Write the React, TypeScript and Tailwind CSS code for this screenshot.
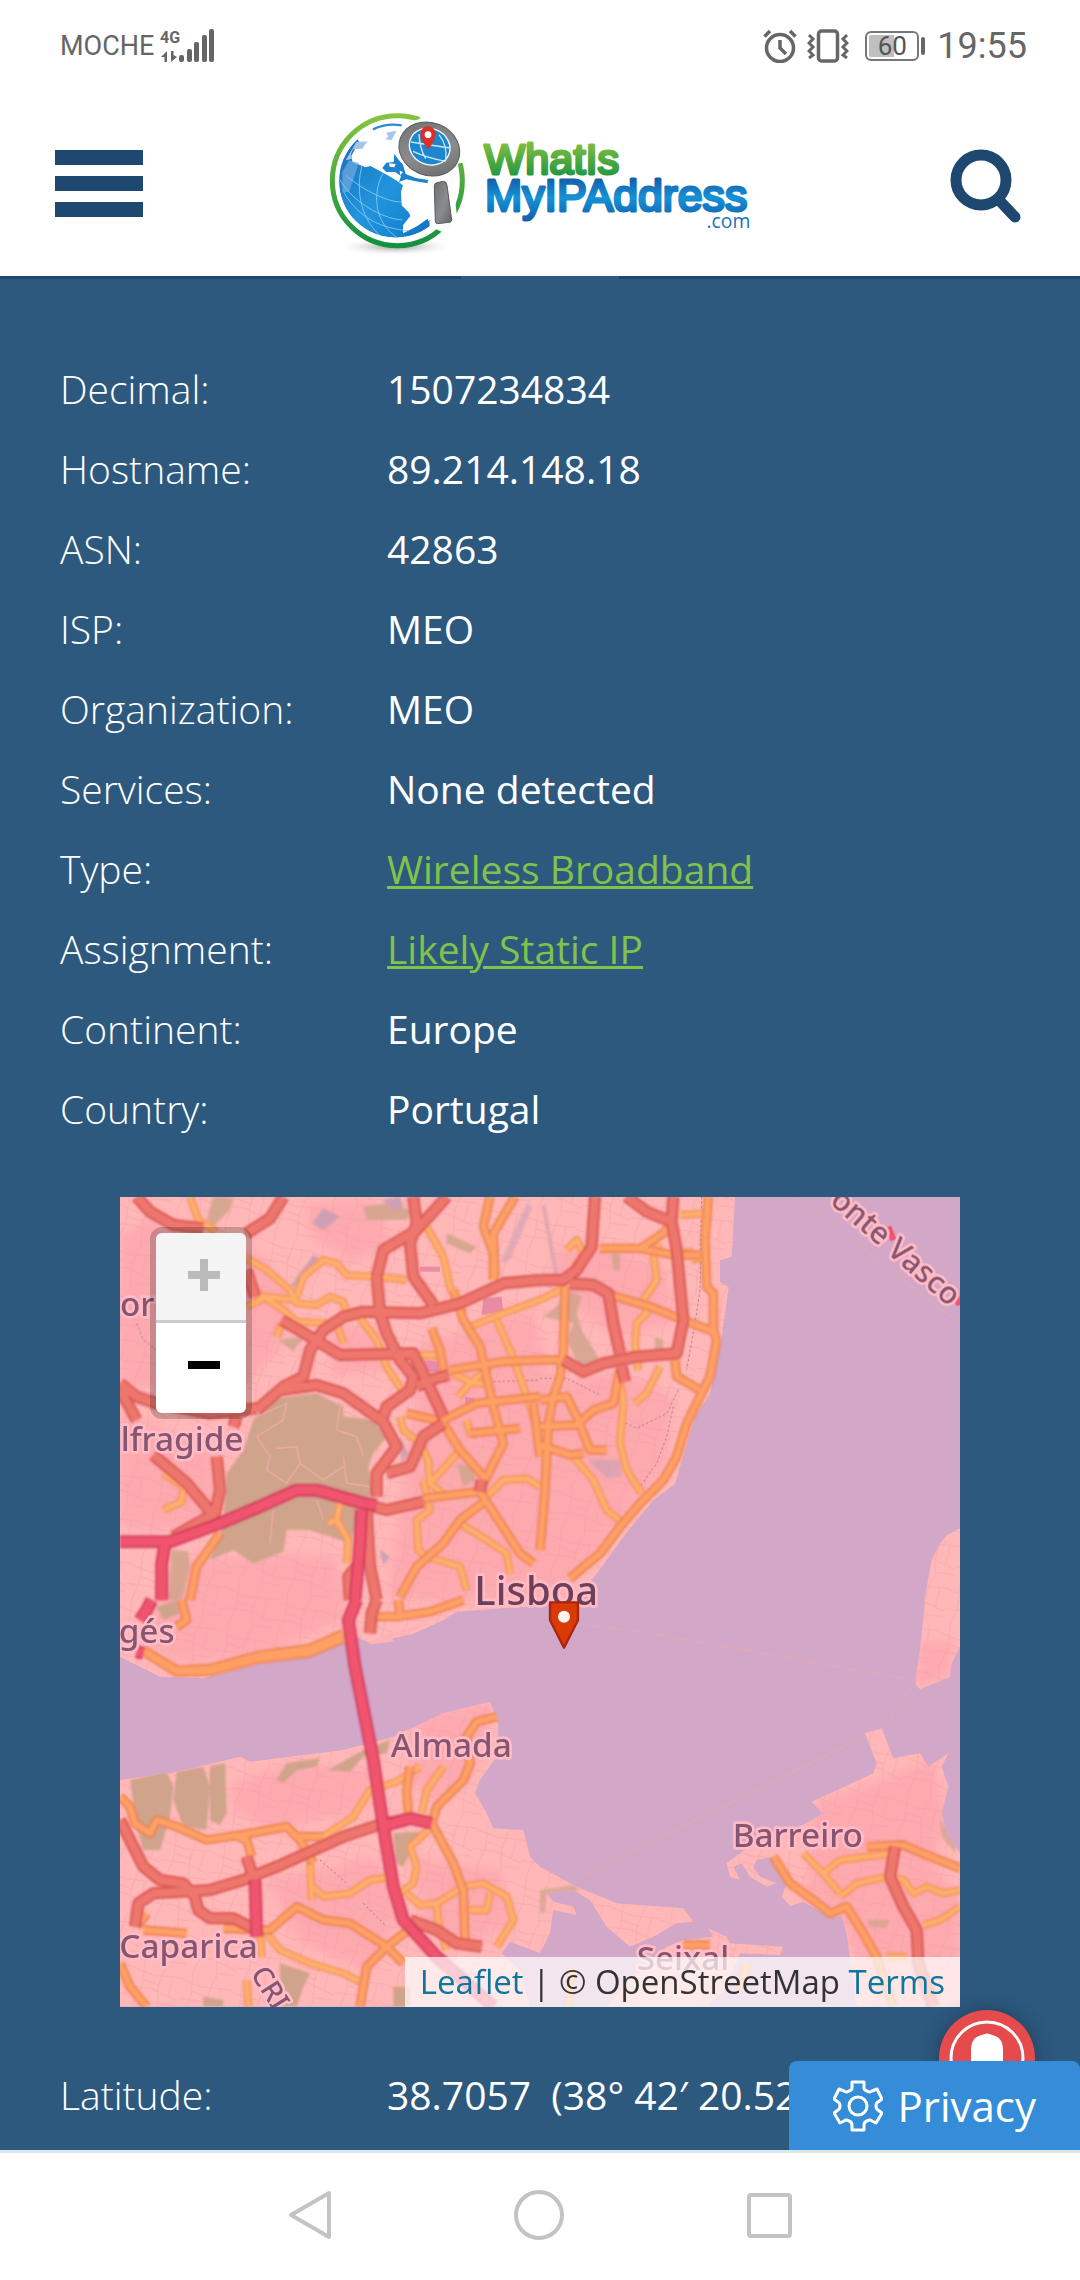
const rows: { label: string; value: string; link?: boolean }[] = [
  { label: "Decimal:", value: "1507234834" },
  { label: "Hostname:", value: "89.214.148.18" },
  { label: "ASN:", value: "42863" },
  { label: "ISP:", value: "MEO" },
  { label: "Organization:", value: "MEO" },
  { label: "Services:", value: "None detected" },
  { label: "Type:", value: "Wireless Broadband", link: true },
  { label: "Assignment:", value: "Likely Static IP", link: true },
  { label: "Continent:", value: "Europe" },
  { label: "Country:", value: "Portugal" },
];

const position = [{ label: "Latitude:", value: "38.7057\u00a0 (38° 42′ 20.52″ N)" }];

function InfoTable({ items }: { items: { label: string; value: string; link?: boolean }[] }) {
  return (
    <table className="w-full table-fixed text-left text-[39px] leading-[80px] text-white">
      <tbody>
        {items.map((r) => (
          <tr key={r.label} className="h-20">
            <th scope="row" className="w-[327px] p-0 font-light">
              {r.label}
            </th>
            <td className="p-0 whitespace-nowrap">
              {r.link ? (
                <a href="#" className="text-[#80c24a] underline decoration-[3px] underline-offset-2">
                  {r.value}
                </a>
              ) : (
                r.value
              )}
            </td>
          </tr>
        ))}
      </tbody>
    </table>
  );
}

/* The map is drawn tile by tile; every tile has its own origin. */
const NW = "translate(-30 -21)";
const NE = "translate(1260 -21)";
const SW = "translate(-30 1209)";
const SE = "translate(1260 1209)";

type Road = [string, string];

const yellow: Road[] = [
  [NW, "M410 205 L470 240 L540 300 L560 340 L620 345 L660 320 L700 335 L710 370"],
  [NW, "M410 350 L470 320 L560 330 M430 300 L520 360 L560 395 L650 400"],
  [NW, "M560 320 L580 260 L640 210 L680 220 L710 255 L800 260 L890 270"],
  [NW, "M240 20 L265 90 L320 125"],
  [NW, "M500 440 L515 400 M680 400 L700 460"],
  [NW, "M750 385 L800 450 L830 530 L875 600 M905 495 L990 495"],
  [NW, "M950 110 L1000 200 L1020 290 L1060 370"],
  [NW, "M160 850 L220 890 L215 935 L160 960"],
  [NW, "M690 940 L680 990 L655 1000 M680 990 L715 1050 L710 1120"],
  [NW, "M870 680 L880 720 L930 760 L955 810 L960 880 L1010 920"],
  [NW, "M960 880 L1060 770 M940 870 L960 960 L920 990 L925 1080 L950 1100 L1050 1130 L1070 1200"],
  [NW, "M1160 390 L1200 480 L1240 590 L1270 680 L1290 720"],
  [NW, "M1020 545 L1090 580 L1130 580 M1045 620 L1080 580 L1140 530"],
  [NW, "M1130 920 L1180 870 L1250 865 L1290 890 M1050 1000 L1130 1050 L1190 1090 L1200 1150"],
  [NW, "M1080 410 L1180 370 L1290 330"],
  [NW, "M1070 690 L1080 730 L1100 735"],
  [NE, "M0 330 L80 290 M80 180 L110 150 L130 190 L100 240"],
  [NE, "M420 75 L490 70 M455 210 L490 205 M390 190 L460 185"],
  [NE, "M360 160 L340 190 L350 270 L310 330 L320 370 L290 400 L285 460 L295 540"],
  [NE, "M240 570 L250 640 L240 760 L260 840 L305 910"],
  [NE, "M100 800 L160 870 L200 960 L250 1000"],
  [NE, "M285 640 L320 610 L360 530"],
  [SW, "M600 780 L605 900 M640 710 L730 650 L780 570 L860 545 L930 500"],
  [SW, "M610 860 L640 890 L720 880 L780 840 L850 830"],
  [SW, "M1000 500 L950 570 L935 640 M955 690 L900 740 L920 800 L910 850 L870 880"],
  [SW, "M890 880 L930 915 L980 910 L1060 860 L1120 850 L1190 890 L1210 960 L1160 1040"],
  [SW, "M1060 930 L1130 930 L1140 880 M980 910 L985 970 L1010 1050"],
  [SW, "M470 1000 L510 1050 L600 1090 L700 1120 L760 1150"],
  [SW, "M450 1000 L455 1070 M410 1140 L415 1220"],
  [SE, "M850 820 L900 780 L1060 760 M790 760 L850 820 L900 880"],
  [SE, "M900 890 L950 850 L1040 830 L1090 840 L1120 880 L1160 860 L1210 880 L1260 870"],
  [SE, "M1150 975 L1200 960 L1260 920"],
  [SE, "M1040 1070 L1100 1070 M95 1100 L85 1220 M620 1090 L600 1170"],
];

const orange: Road[] = [
  [NW, "M1140 20 L1120 110 L1150 190 L1150 270"],
  [NW, "M1215 20 L1150 130 L1155 260"],
  [NW, "M965 415 L990 480 L1005 560"],
  [NW, "M1030 300 L1060 390 L1110 470 L1130 560 L1150 650 L1180 760 L1130 860 L1110 900"],
  [NW, "M1020 540 L1180 515 L1290 510"],
  [NW, "M1000 690 L1100 640 L1290 620 M890 670 L1000 695"],
  [NW, "M1000 700 L1050 780 L1130 870"],
  [NW, "M330 1030 L260 1130 L240 1230"],
  [NW, "M940 925 L1110 905 L1230 1090 L1270 1120"],
  [NW, "M1130 930 L1050 990 L1000 1060 L920 1130 L870 1220"],
  [NW, "M1270 640 L1290 800 M1080 730 L1230 715"],
  [NE, "M0 510 L70 510 M75 290 L70 480 L60 560 L40 620 L25 700 L15 900 L0 1080"],
  [NE, "M0 630 L80 620 L110 680 L130 730 L150 780 L200 780"],
  [NE, "M0 710 L110 705 L160 660 L220 640 L240 540"],
  [NE, "M0 765 L90 795 L130 790"],
  [NE, "M505 20 L495 150 L500 290 L520 310 L520 420 L530 450 L510 560 L480 620 L440 700 L410 800 L370 870 L300 940 L240 1010 L180 1090 L90 1165"],
  [NE, "M405 510 L410 560 L480 600"],
  [NE, "M180 175 L300 175 L370 130 L395 100 M300 175 L400 195 L480 195"],
  [NE, "M130 275 L230 320 L330 350 L430 390 L520 425"],
  [SW, "M100 150 L200 210 L300 205 L450 165 L600 145 L700 100"],
  [SW, "M110 160 L200 216 L300 214 L450 176 L600 158 L700 116"],
  [SW, "M780 50 L860 50 L960 35 L1060 0 M865 0 L870 45"],
  [SW, "M215 0 L230 60 L200 80"],
  [SW, "M30 590 L60 620 L75 670 L120 700 L140 660 L200 680 L290 720 L420 700 L530 680 L570 720 L610 790"],
  [SW, "M370 705 L410 720 L425 770 M560 710 L640 710"],
  [SW, "M30 1090 L60 1160 L110 1220 M80 980 L110 940 M100 990 L230 1000 M340 985 L480 990 L560 920 L640 960 L720 970 L830 1040 L880 1090"],
  [SW, "M895 990 L830 1040 L770 1100 L750 1220"],
  [SW, "M1160 350 L1100 365 L1070 410 L1080 490 L1060 540 L980 620 L965 670 L1030 790 L1060 870 L1065 1030"],
  [SW, "M900 500 L890 570 L895 640"],
  [SE, "M700 770 L750 850 L820 900 L870 940 L920 920 L970 1000 L1010 1070 L1060 1220"],
  [SE, "M980 740 L1090 735 L1160 765 L1260 805"],
  [SE, "M430 1035 L510 1035"],
];

const red: Road[] = [
  [NW, "M80 20 L120 65 L190 105 L280 115 M410 130 L480 85 L520 20"],
  [NW, "M410 240 L435 320"],
  [NW, "M1010 20 L920 120 L820 180 L800 260 L810 370 L830 430 L870 510 L910 560 L900 600 L830 650 L820 680"],
  [NW, "M910 20 L920 100 L900 160 L910 260 L970 345"],
  [NW, "M440 660 L520 590 L580 560 L600 480 L640 420 L700 380 L760 365 L930 370 L1050 340 L1180 280 L1290 270"],
  [NW, "M515 390 L600 440 L690 495 L910 490 L1000 680"],
  [NW, "M920 590 L960 570 L1015 555"],
  [NW, "M510 600 L620 585 L700 610 L820 695 L860 770 L800 850 L800 920"],
  [NW, "M1000 700 L940 740 L900 830 L830 850"],
  [NW, "M30 580 L80 620 L140 640 L300 670 L440 655 M30 600 L80 690"],
  [NW, "M380 680 L370 710 M130 795 L230 880 L310 975 M320 800 L330 900 L315 970 L190 1040"],
  [NW, "M770 945 L830 960 L940 935 M1110 905 L1115 870"],
  [NW, "M770 960 L775 1060 L780 1130 L800 1230"],
  [NW, "M720 1230 L715 1160 L740 1130"],
  [NE, "M165 20 L155 170 L110 240 L70 270 L0 270"],
  [NE, "M260 20 L320 65 L395 95 L400 20 M395 95 L410 180 L430 390 L410 490 L290 500 L190 520 L130 545 L70 510"],
  [NE, "M90 280 L160 285 L205 310 L220 400 L240 490 M245 530 L255 575"],
  [SW, "M800 0 L785 40 L780 100"],
  [SW, "M30 660 L60 720 L100 800 L150 840 L220 850 L255 890 L265 930 L300 955 L370 955 L430 985"],
  [SW, "M75 980 L85 910 L130 880 L300 870 L400 840 L500 800 L700 710 L820 670 L890 660"],
  [SW, "M410 770 L435 850 M900 960 L980 990 L1040 1030 L1115 1040"],
  [SE, "M1065 740 L1050 830 L1090 920 L1130 990 L1135 1090 L1180 1220"],
];

const motorway: Road[] = [
  [NW, "M30 1055 L180 1055 L330 1000 L460 945 L560 900 L620 900 L760 940 L800 945"],
  [NW, "M165 1060 L155 1120 L155 1230 M755 960 L750 1060 L735 1230"],
  [SW, "M125 0 L110 30 L90 60 M80 155 L100 160 M740 0 L715 60 L735 200 L790 480 L820 680 L850 860 L880 960 L980 1070 L1150 1220"],
  [SW, "M435 840 L440 1010 M830 675 L900 655 L965 670"],
];

function Roads({ list, casing, fill, wide }: { list: Road[]; casing: string; fill: string; wide: number }) {
  return (
    <g fill="none" strokeLinejoin="round" strokeLinecap="butt">
      {list.map(([t, d], i) => (
        <path key={"c" + i} transform={t} d={d} stroke={casing} strokeWidth={wide} />
      ))}
      {list.map(([t, d], i) => (
        <path key={"f" + i} transform={t} d={d} stroke={fill} strokeWidth={wide - 11} />
      ))}
    </g>
  );
}

function MapDrawing() {
  return (
    <svg viewBox="0 0 2520 2430" className="block w-full" role="img" aria-label="Map of Lisboa">
      <defs>
        <clipPath id="land">
          <path d="M0 0 H1845 L1835 179 L1800 190 V255 L1826 270 L1805 420 L1770 590 L1725 660 L1695 760 L1665 860 L1600 910 L1525 1000 L1430 1130 L1360 1215 L1220 1229 L1010 1244 L970 1270 L880 1310 L750 1339 L710 1319 L570 1379 L420 1399 L250 1444 L120 1439 L50 1404 L0 1379 Z" />
          <path
            transform={SW}
            d="M30 540 L200 515 L390 470 L420 485 L700 450 L850 410 L1000 340 L1140 305 L1165 370 L1160 470 L1110 540 L1095 580 L1130 640 L1150 685 L1240 690 L1260 770 L1290 800 L1400 860 L1520 910 L1720 925 L1750 965 L1700 970 L1630 1010 L1560 1040 L1490 980 L1440 900 L1390 870 L1310 880 L1330 905 L1390 920 L1400 945 L1330 930 L1320 1000 L1290 1060 L1200 1025 L1175 1060 L1230 1110 L1260 1220 H30 Z"
          />
          <path
            transform={SE}
            d="M815 605 L1000 520 L1010 490 L975 400 L1025 385 L1060 475 L1140 460 L1165 500 L1225 460 L1205 500 L1225 560 L1205 640 L1220 700 L1260 760 V1220 H950 L920 1000 L905 950 L870 950 L790 905 L750 918 L725 890 L740 850 L700 770 L650 780 L640 800 L660 830 L710 850 L680 860 L630 830 L605 790 L580 800 L600 840 L570 830 L560 790 L620 745 L800 670 L850 640 Z M1155 0 L1140 150 L1125 250 L1140 268 L1230 230 L1235 190 L1260 140 V0 Z M380 1040 L430 1020 L520 1010 L505 985 L560 1010 L570 1030 L730 1040 L720 1065 L600 1060 L560 1160 L500 1220 H200 L260 1150 Z"
          />
          <path d="M2520 994 L2480 1015 L2460 1039 L2435 1089 L2412 1215 H2520 Z" />
        </clipPath>
        <pattern id="streets" width="150" height="130" patternUnits="userSpaceOnUse" patternTransform="rotate(14)">
          <path
            d="M0 22 L60 30 L150 18 M0 80 L70 72 L150 88 M28 0 L36 70 L24 130 M92 0 L84 60 L98 130 M36 50 L90 56 M98 110 L150 104 M120 20 V80"
            fill="none"
            stroke="#f29aa4"
            strokeWidth="3"
            opacity=".45"
          />
        </pattern>
        <filter id="soft">
          <feGaussianBlur stdDeviation="3" />
        </filter>
        <filter id="softer">
          <feGaussianBlur stdDeviation="12" />
        </filter>
      </defs>
      <rect width="2520" height="2430" fill="#d3a7c7" />
      <g clipPath="url(#land)">
        <rect width="2520" height="2430" fill="#ffb8b7" />
        <g fill="#fda6ad" opacity=".75" filter="url(#softer)">
          <path d="M0 120 L90 60 L240 160 L420 170 L520 300 L480 460 L380 560 L200 590 L0 560 Z" />
          <path d="M560 20 L760 10 L820 130 L700 200 L580 130 Z M620 380 L780 400 L800 520 L640 540 Z" />
          <path d="M0 640 L280 760 L280 960 L80 1010 L0 980 Z M200 1090 L480 1070 L650 1080 L690 1260 L440 1370 L180 1400 L60 1330 Z" />
          <path d="M900 440 L1240 340 L1300 560 L1500 520 L1660 600 L1640 800 L1480 1000 L1340 1180 L1000 1220 L800 1200 L860 800 Z" />
          <path d="M1300 150 L1500 160 L1640 220 L1660 380 L1480 420 L1320 300 Z" />
          <path d="M330 1760 L520 1700 L760 1720 L720 1840 L460 1900 L340 1840 Z M440 2050 L760 1980 L860 2140 L740 2320 L540 2240 Z" />
          <path d="M900 1560 L1120 1520 L1060 1740 L940 1820 L860 1740 Z M880 1980 L1140 2020 L1180 2180 L1020 2260 L900 2160 Z" />
          <path d="M2080 1820 L2440 1690 L2480 1860 L2440 2000 L2520 2100 V2430 H2240 L2180 2200 L2060 2080 Z M2400 1340 L2500 1330 L2490 1430 L2390 1470 Z" />
        </g>
        <rect width="2520" height="2430" fill="url(#streets)" />
        <g fill="#d0a38b" filter="url(#soft)">
          <g transform={NW}>
            <path d="M490 625 L620 610 L700 650 L700 680 L790 690 L830 740 L790 790 L775 830 L790 900 L760 950 L720 1060 L600 1020 L530 1020 L520 1085 L430 1120 L370 1080 L300 1110 L340 1000 L350 850 L400 780 L430 690 Z" />
            <path
              d="M185 1080 L235 1085 L240 1130 L215 1230 L175 1230 Z M310 20 L370 22 L360 60 L310 110 L290 90 Z M760 50 L830 40 L905 60 L890 90 L770 90 Z M1010 130 L1100 170 L1080 190 L1010 160 Z M1040 820 L1090 830 L1095 870 L1060 890 Z M505 450 L580 440 L550 485 Z"
              opacity=".85"
            />
          </g>
          <g transform={NE} opacity=".8">
            <path d="M90 300 L125 320 L110 370 L125 420 L180 510 L120 530 L80 450 L100 400 L10 380 L60 340 Z M215 190 H240 V240 H220 Z M345 440 L370 450 L365 500 L345 490 Z" />
          </g>
          <g transform={SW}>
            <path d="M60 540 L170 515 L190 560 L180 650 L150 750 L100 750 L80 680 Z M200 515 L280 500 L300 560 L290 690 L220 680 L190 600 Z M300 500 L345 490 L350 640 L330 675 L300 660 Z M500 540 L530 490 L630 475 L620 500 L560 510 L520 550 Z M655 510 L690 490 L760 450 L840 420 L830 460 L760 470 L720 515 Z M850 700 L930 695 L880 800 L860 790 Z M510 1090 L600 1120 L580 1160 L560 1220 H510 Z M850 1160 H900 V1220 H850 Z M280 1190 L340 1200 V1220 H280 Z M140 20 L200 0 L210 40 L160 60 Z" />
          </g>
          <g transform={SE} opacity=".7">
            <path d="M980 960 L1050 960 L1040 985 L990 980 Z M1200 660 L1250 720 L1245 760 L1205 710 Z M0 870 L100 855 L120 870 L20 885 L15 940 H0 Z" />
          </g>
        </g>
        <g transform={NW} fill="none" stroke="#e9aaa0" strokeWidth="5">
          <path d="M440 680 L530 640 L520 690 L440 740 L480 800 L470 840 L530 880 L570 820 L560 770 L500 775 M690 650 L680 720 L740 740 L760 800 M700 800 L710 880 L780 890 M570 820 L640 870 L700 830 M490 960 L480 1060 M620 930 L640 990" />
        </g>
        <g fill="#cfa0b4" filter="url(#soft)">
          <g transform={NW}>
            <path d="M640 55 L690 80 L640 120 L605 100 Z M540 290 L610 195 L630 205 L560 290 Z M820 30 L870 20 L880 55 L840 60 Z M870 740 L895 790 L875 820 Z M810 1080 L840 1100 L820 1125 Z" />
            <path d="M1170 220 L1250 40 L1268 50 L1200 210 Z" opacity=".6" />
          </g>
          <g transform={NE} opacity=".7">
            <path d="M145 810 L240 810 L245 860 L200 865 Z M15 40 L55 260 L45 260 L5 50 Z" />
          </g>
        </g>
        <g transform={NW} fill="#ea8ba6">
          <path d="M1120 325 L1175 320 L1180 365 L1115 375 Z M940 510 L990 515 L985 545 L950 545 Z M1065 620 L1095 625 L1085 650 L1065 645 Z M930 230 H990 V245 H930 Z" />
        </g>
      </g>
      <path transform={SW} d="M790 125 L860 105 L940 75 M810 110 L900 92 M780 128 L850 120" fill="none" stroke="#ffb2b5" strokeWidth="9" />
      <g fill="none" stroke="#dbaabb" strokeWidth="5">
        <path d="M1400 1284 L1600 1310 L2380 1450" strokeDasharray="40 26" strokeWidth="7" />
        <path d="M2380 1460 L2290 1590 M2230 1620 L1360 2050 M2030 0 L2520 380" />
      </g>
      <g fill="none" stroke="#a98093" strokeWidth="3" strokeDasharray="7 7">
        <path transform={NW} d="M80 400 L100 450 L140 480 M1150 575 L1290 570" />
        <path transform={NE} d="M0 565 L80 565 L180 615 M485 20 L480 300 L465 400 L440 540 M415 600 L380 670 L290 715 L240 690 M400 650 L380 740 L350 820 L300 890" />
        <path transform={SW} d="M630 780 L710 850 M760 910 L830 980" />
      </g>
      <g filter="url(#soft)">
        <Roads list={yellow} casing="#f3945f" fill="#ffb06c" wide={24} />
        <Roads list={orange} casing="#ea8152" fill="#ffa065" wide={28} />
        <Roads list={red} casing="#d85150" fill="#ee776d" wide={36} />
        <Roads list={motorway} casing="#d0355a" fill="#f1546e" wide={38} />
      </g>
      <path transform={NE} d="M1045 110 L1060 150 M1245 310 L1258 345" stroke="#f2536c" strokeWidth="18" />
      <g
        fontFamily="'Noto Sans', sans-serif"
        fontSize="100"
        fontWeight="500"
        fill="#875570"
        stroke="#ffbcc6"
        strokeWidth="16"
        strokeLinejoin="round"
        style={{ paintOrder: "stroke" }}
      >
        <text x="0" y="357">or</text>
        <text x="2" y="762">lfragide</text>
        <text x="-4" y="1337">gés</text>
        <text x="812" y="1681">Almada</text>
        <text x="-2" y="2284">Caparica</text>
        <text x="1838" y="1949">Barreiro</text>
        <text x="1550" y="2320">Seixal</text>
        <text x="1063" y="1223" fontSize="120" fill="#6d3f58">Lisboa</text>
        <text transform="translate(390 2330) rotate(58)" fontSize="84">CRI</text>
        <text transform="translate(2126 18) rotate(41)" fontSize="92">onte Vasco</text>
      </g>
      <g>
        <path d="M1290 1216 H1374 V1270 L1332 1352 L1290 1270 Z" fill="#d93a06" stroke="#a92510" strokeWidth="7" strokeLinejoin="round" />
        <circle cx="1332" cy="1259" r="18" fill="#fff3ee" />
      </g>
    </svg>
  );
}

function Logo() {
  return (
    <svg viewBox="0 0 1440 540" className="block w-[480px]" role="img" aria-label="WhatIsMyIPAddress.com">
      <defs>
        <linearGradient id="green" x1="0" y1="0" x2="0" y2="1">
          <stop offset="0" stopColor="#86c440" />
          <stop offset="1" stopColor="#12913f" />
        </linearGradient>
        <linearGradient id="word1" gradientUnits="userSpaceOnUse" x1="0" y1="150" x2="0" y2="255">
          <stop offset="0" stopColor="#83bf41" />
          <stop offset="1" stopColor="#1f9640" />
        </linearGradient>
        <linearGradient id="word2" gradientUnits="userSpaceOnUse" x1="0" y1="262" x2="0" y2="385">
          <stop offset="0" stopColor="#1560ad" />
          <stop offset=".45" stopColor="#1592d6" />
          <stop offset=".8" stopColor="#1272bd" />
          <stop offset="1" stopColor="#1560ad" />
        </linearGradient>
        <linearGradient id="sea" x1="0" y1="0" x2="1" y2="1">
          <stop offset="0" stopColor="#1668b5" />
          <stop offset=".5" stopColor="#2195dc" />
          <stop offset="1" stopColor="#0c74c6" />
        </linearGradient>
        <linearGradient id="steel" x1="0" y1="0" x2="1" y2="1">
          <stop offset="0" stopColor="#6f7072" />
          <stop offset=".55" stopColor="#8b8c8e" />
          <stop offset="1" stopColor="#636466" />
        </linearGradient>
        <radialGradient id="shade">
          <stop offset="0" stopColor="#8a8a8a" stopOpacity=".9" />
          <stop offset="1" stopColor="#fff" stopOpacity="0" />
        </radialGradient>
        <clipPath id="globe">
          <circle cx="290" cy="267" r="170" />
        </clipPath>
      </defs>
      <ellipse cx="290" cy="464" rx="180" ry="28" fill="url(#shade)" />
      <circle cx="295" cy="266" r="195" fill="#fff" stroke="url(#green)" strokeWidth="15" />
      <g clipPath="url(#globe)">
        <circle cx="290" cy="267" r="170" fill="url(#sea)" />
        <path d="M140 60 H480 V380 L400 372 L386 390 L356 402 L312 424 L312 400 L334 372 L330 362 L308 340 L306 300 L312 280 L296 268 L270 252 L244 238 L214 222 L200 226 L160 210 L158 190 L180 150 Z" fill="#fff" />
        <path d="M172 150 L140 205 L160 200 L156 186 L162 172 L190 170 L205 148 Z" fill="#a6c3e8" />
        <path d="M130 240 L150 205 L180 212 L150 300 L130 300 Z" fill="#7fb2e4" opacity=".6" />
        <path d="M262 122 L292 116 L286 128 L278 144 L258 142 L268 134 Z" fill="#a6c3e8" />
        <path d="M286 186 L300 205 L312 218 L320 246 L350 258 L388 264 L386 274 L350 268 L322 262 L300 270 L306 252 L288 240 L262 240 L250 228 L262 212 L284 210 Z" fill="#1d83cf" />
        <path d="M270 214 L290 216 L286 226 L272 224 Z M302 236 L312 240 L304 250 Z" fill="#fff" />
        <path d="M386 380 L392 402 L362 420 L318 434 L330 420 Z" fill="#1878c8" />
        <g fill="none" stroke="#8fd0f5" strokeWidth="3" opacity=".8">
          <path d="M190 218 C166 300 190 390 250 436 M252 244 C216 310 230 400 300 440 M122 262 C160 330 250 380 310 384 M134 300 C180 380 250 410 330 416 M140 250 C200 300 270 330 306 330" />
        </g>
      </g>
      <path d="M222 112 Q262 92 308 100" fill="none" stroke="#2a8ad2" strokeWidth="7" />
      <path d="M378 60 L500 60 L494 212 L480 214 L440 262 L330 240 L290 180 L310 96 L360 82 Z" fill="#fff" />
      <path d="M386 266 L460 254 L474 372 L462 380 L440 410 L440 425 L392 402 Z" fill="#fff" />
      <ellipse cx="391" cy="171" rx="93" ry="79" transform="rotate(22 391 171)" fill="url(#steel)" stroke="#58595b" strokeWidth="3" />
      <ellipse cx="392" cy="164" rx="62" ry="54" transform="rotate(22 392 164)" fill="#1c86cf" stroke="#fff" strokeWidth="4" />
      <path d="M336 150 Q400 160 452 168 M342 178 Q380 196 440 208 M360 126 Q362 170 380 200 M420 128 Q446 160 440 206" fill="none" stroke="#c9e8fa" strokeWidth="4" />
      <path d="M388 172 Q362 142 364 126 A23 23 0 0 1 410 126 Q410 144 388 172 Z" fill="#dd2f25" />
      <circle cx="387" cy="128" r="10" fill="#fff" />
      <path d="M414 272 L434 268 Q442 268 444 280 L458 384 Q458 390 450 391 L416 395 Q409 395 409 388 L406 282 Q406 273 414 272 Z" fill="url(#steel)" stroke="#58595b" strokeWidth="3" />
      <g fontFamily="'Liberation Sans', Arial, sans-serif" strokeWidth="9" strokeLinejoin="round">
        <text x="556" y="246" fontSize="130" fill="url(#word1)" stroke="url(#word1)">WhatIs</text>
        <text x="558" y="357" fontSize="134" fill="url(#word2)" stroke="url(#word2)">MyIPAddress</text>
      </g>
      <text x="1354" y="408" textAnchor="end" fontFamily="'Open Sans', sans-serif" fontSize="58" fill="#1a73bb">
        .com
      </text>
    </svg>
  );
}

function StatusBar() {
  return (
    <div className="flex h-[92px] items-center justify-between pr-[53px] pl-[60px] font-[Roboto,sans-serif] text-[#666]">
      <div className="flex items-center">
        <span className="text-[27px] leading-8">MOCHE</span>
        <svg viewBox="160 27 56 36" className="ml-[6px] h-9 w-14" fill="#666" aria-hidden="true">
          <text x="160" y="42" fontSize="16" fontWeight="700">4G</text>
          <path d="M161 56 L167 50 V61 H164.500 V56 Z M171 50 H173.500 V54 L177 56 L171 61 Z" />
          <rect x="179" y="54" width="5" height="7" rx="2" />
          <rect x="187" y="48" width="5" height="13" rx="2" />
          <rect x="194" y="41" width="5" height="20" rx="2" />
          <rect x="202" y="34" width="5" height="27" rx="2" />
          <rect x="209" y="28" width="5" height="33" rx="2" />
        </svg>
      </div>
      <div className="flex items-center">
        <svg viewBox="0 0 34 34" className="h-[34px] w-[34px]" fill="none" stroke="#666" strokeWidth="3.500" aria-hidden="true">
          <circle cx="17" cy="19" r="13.500" />
          <path d="M17 11 V19 L23 25 M1.500 7.500 L7 2 M32.500 7.500 L27 2" />
        </svg>
        <svg viewBox="0 0 42 34" className="ml-[10px] h-[34px] w-[42px]" fill="none" stroke="#666" strokeWidth="3" aria-hidden="true">
          <rect x="11.500" y="2" width="19" height="30" rx="3" strokeWidth="3.500" />
          <path d="M2 6 L6 10 L2 14 L6 18 L2 22 L6 26 L2 29 M40 6 L36 10 L40 14 L36 18 L40 22 L36 26 L40 29" />
        </svg>
        <div className="ml-4 flex items-center">
          <div className="flex h-[30px] w-[54px] items-center justify-center rounded-md border-2 border-[#777] bg-[linear-gradient(to_right,#bfbfbf_54%,white_54%)] bg-clip-content p-[2px] text-[26px] leading-none text-[#555]">
            60
          </div>
          <div className="ml-[2px] h-[18px] w-1 rounded-sm bg-[#666]" />
        </div>
        <span className="ml-3 text-4xl leading-[42px]">19:55</span>
      </div>
    </div>
  );
}

export default function App() {
  return (
    <div className="flex min-h-screen flex-col bg-white font-['Open_Sans','Noto_Sans',sans-serif]">
      <StatusBar />
      <header className="flex h-[184px] items-start justify-between bg-white pr-[57px] pl-[55px]">
        <button type="button" aria-label="Menu" className="mt-[58px] flex w-[88px] flex-col gap-[11px]">
          <span className="h-[15px] bg-[#1f4871]" />
          <span className="h-[15px] bg-[#1f4871]" />
          <span className="h-[15px] bg-[#1f4871]" />
        </button>
        <a href="#" className="block">
          <Logo />
        </a>
        <button type="button" aria-label="Search" className="mt-[57px] flex w-[88px] justify-end">
          <svg viewBox="0 0 76 76" className="h-[76px] w-[76px]" fill="none" stroke="#1f4871" aria-hidden="true">
            <circle cx="34" cy="31" r="25" strokeWidth="11" />
            <path d="M52 51 L68 68" strokeWidth="11" strokeLinecap="round" />
          </svg>
        </button>
      </header>

      <div className="relative flex-1 bg-[#2d597f]">
        <div className="flex h-[3px] justify-center bg-[#1f4871]">
          <div className="w-[158px] bg-[#2d597f]" />
        </div>
        <main className="px-[60px] pt-[70px] pb-[15px]">
          <InfoTable items={rows} />
          <section className="relative mx-[60px] my-12 overflow-hidden">
            <MapDrawing />
            <div className="absolute top-[30px] left-[30px] flex w-[102px] flex-col rounded-xl border-6 border-black/20 bg-clip-padding">
              <button type="button" aria-label="Zoom in" disabled className="flex h-[90px] items-center justify-center rounded-t-md border-b-3 border-[#ccc] bg-[#f4f4f4] pb-1 pl-[6px]">
                <svg viewBox="0 0 32 32" className="h-8 w-8" fill="#bbb" aria-hidden="true">
                  <path d="M12 0 H20 V12 H32 V20 H20 V32 H12 V20 H0 V12 H12 Z" />
                </svg>
              </button>
              <button type="button" aria-label="Zoom out" className="flex h-[90px] items-center justify-center rounded-b-md bg-white pb-[6px] pl-[6px]">
                <span className="h-2 w-8 bg-black" />
              </button>
            </div>
            <div className="absolute right-0 bottom-0 bg-white/70 px-[15px] text-[33px] leading-[50px] whitespace-nowrap text-[#333]">
              <a href="#" className="text-[#0f769f]">Leaflet</a> | © OpenStreetMap{" "}
              <a href="#" className="text-[#0f769f]">Terms</a>
            </div>
          </section>
          <InfoTable items={position} />
        </main>

        <button
          type="button"
          aria-label="Notifications"
          className="absolute right-[45px] bottom-[44px] flex h-24 w-24 items-center justify-center rounded-full bg-[#e54b4d] shadow-[0_0_20px_rgba(0,0,0,0.3)]"
        >
          <svg viewBox="0 0 96 96" className="h-24 w-24" aria-hidden="true">
            <circle cx="48" cy="48" r="36" fill="none" stroke="#fff" strokeWidth="3" />
            <path d="M32 60 V40 Q32 27 43 25 Q48 22 53 25 Q64 27 64 40 V60 L68 66 H28 Z" fill="#fff" />
          </svg>
        </button>
        <button
          type="button"
          className="absolute right-0 bottom-0 flex h-[89px] items-center gap-[14px] rounded-t-lg bg-[#358cd8] px-[44px] text-[42px] leading-none text-white"
        >
          <svg viewBox="0 0 50 52" className="h-[52px] w-[50px]" fill="none" stroke="#fff" strokeWidth="3" strokeLinejoin="round" aria-hidden="true">
            <path d="M19 2 H31 V8 Q31 10 34 11 Q37 13 39 11 L44 9 L49 19 L45 22 Q43 23 43 26 Q43 29 45 30 L49 33 L43 43 L39 41 Q37 39 34 41 Q31 42 31 45 V50 H19 V45 Q19 42 16 41 Q13 39 11 41 L7 43 L1 33 L5 30 Q7 29 7 26 Q7 23 5 22 L1 19 L6 9 L11 11 Q13 13 16 11 Q19 10 19 8 Z" />
            <circle cx="25" cy="26" r="9" />
          </svg>
          Privacy
        </button>
      </div>

      <nav className="flex h-[130px] items-center justify-center gap-[183px] border-t-3 border-[#dbe5ea] bg-white pb-[3px]">
        <button type="button" aria-label="Back">
          <svg viewBox="0 0 43 50" className="block h-[50px] w-[43px]" fill="none" stroke="#c3c3c3" strokeWidth="4" strokeLinejoin="round" aria-hidden="true">
            <path d="M41 3 V47 L3 25 Z" />
          </svg>
        </button>
        <button type="button" aria-label="Home" className="h-[50px] w-[50px] rounded-full border-4 border-[#c3c3c3]" />
        <button type="button" aria-label="Recent apps" className="h-[45px] w-[45px] rounded-sm border-4 border-[#c3c3c3]" />
      </nav>
    </div>
  );
}
